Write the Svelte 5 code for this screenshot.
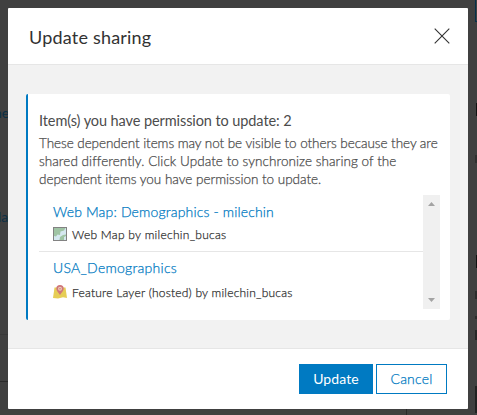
<script>
  const lines = [
    { text: 'These dependent items may not be visible to others because they are', ls: -0.06 },
    { text: 'shared differently. Click Update to synchronize sharing of the', ls: 0.05 },
    { text: 'dependent items you have permission to update.', ls: -0.02 }
  ];
</script>

<div class="page">
  <div class="behind">
    <span class="bl" style="left:-6px;top:104px">ne</span>
    <span class="bl" style="left:-2px;top:208px">la</span>
    <i style="left:0;top:334px;width:8px;height:1px;background:#393939"></i>
    <i style="left:0;top:381px;width:8px;height:1px;background:#2a2a2a"></i>
    <i style="left:406px;top:409px;width:1px;height:6px;background:#2a2a2a"></i>
    <i style="left:475px;top:0;width:1px;height:22px;background:#06314b"></i>
    <i style="left:475px;top:21px;width:2px;height:1px;background:#06314b"></i>
    <i style="left:476px;top:103px;width:1px;height:13px;background:#111"></i>
    <i style="left:475px;top:155px;width:2px;height:8px;background:#303030"></i>
    <i style="left:476px;top:255px;width:1px;height:13px;background:#111"></i>
    <i style="left:475px;top:291px;width:2px;height:8px;background:#2c2c2c"></i>
    <i style="left:475px;top:316px;width:2px;height:3px;background:#2c2c2c"></i>
    <i style="left:475px;top:330px;width:2px;height:10px;background:#262626"></i>
    <i style="left:475px;top:386px;width:2px;height:27px;background:#222"></i>
  </div>
  <section class="modal">
    <header>
      <h1>Update sharing</h1>
      <svg width="16" height="16" viewBox="0 0 16 16"><path d="M.7.7l14.6 14.6M15.3.7L.7 15.3" stroke="#323232" stroke-width="1.1" fill="none"/></svg>
    </header>
    <main>
      <div class="card">
        <h2>Item(s) you have permission to update: 2</h2>
        <p>{#each lines as l}<span class="line"><span style="letter-spacing:{l.ls}px">{l.text}</span></span>{/each}</p>
        <div class="list">
          <ul>
            <li>
              <a href="#map">Web Map: Demographics - milechin</a>
              <div class="meta">
                <svg width="14" height="14" viewBox="0 0 14 14"><path fill="#828282" d="M0 0h14v14H0z"/><path fill="#d5e8f0" d="M1 1h12v12H1z"/><path fill="#9fc4a4" d="M1 1h11.500L11 3.500 7.500 4.500 7 8 4.500 7.500 3 9.500 1 9zM6.500 13l.5-3 3-2 3-.5V9l-2 1v3z"/></svg>
                <span class="m1">Web Map by milechin_bucas</span>
              </div>
            </li>
            <li>
              <a class="a2" href="#layer">USA_Demographics</a>
              <div class="meta second">
                <svg width="14" height="14" viewBox="0 0 14 14"><path fill="#e6cd55" d="M1.500 2.500h11L14 13l-4-.7-5 1.200L0 13z"/><path fill="#d0777a" d="M7 10C5 7 3.300 5.500 3.300 3.500a3.700 3.500 0 0 1 7.400 0C10.700 5.500 9 7 7 10z"/><circle cx="7" cy="3.700" r="2" fill="#eacbb8"/><circle cx="7" cy="3.700" r=".8" fill="#d0777a"/></svg>
                <span class="m2">Feature Layer (hosted) by milechin_bucas</span>
              </div>
            </li>
          </ul>
          <div class="bar">
            <svg width="7" height="4" viewBox="0 0 7 4"><path fill="#a3a3a3" d="M3.500 0L7 4H0z"/></svg>
            <svg width="7" height="4" viewBox="0 0 7 4"><path fill="#a3a3a3" d="M3.500 4L7 0H0z"/></svg>
          </div>
        </div>
      </div>
    </main>
    <footer>
      <button class="primary">Update</button>
      <button class="ghost">Cancel</button>
    </footer>
  </section>
</div>

<style>
  .page { position: relative; width: 477px; height: 415px; overflow: hidden; background: #404040; padding: 8px; box-sizing: border-box; font-family: Lato, "Open Sans", sans-serif; color: #4c4c4c; }
  .page * { box-sizing: border-box; }
  .behind { position: absolute; inset: 0; }
  .behind i { position: absolute; }
  .bl { position: absolute; font-size: 14px; line-height: 18px; color: #0b2f45; white-space: nowrap; }
  .modal { position: relative; width: 460px; height: 401px; background: #fff; border-radius: 1px; display: flex; flex-direction: column; }
  header { height: 57px; flex: none; border-bottom: 1px solid #e6e6e6; display: flex; align-items: center; justify-content: space-between; padding: 0 18px 0 21px; }
  h1 { margin: 2px 0 0; font-size: 18px; line-height: 24px; font-weight: 400; color: #323232; letter-spacing: .2px; }
  main { height: 284px; flex: none; background: #f2f2f2; border-bottom: 1px solid #e6e6e6; padding: 29px 18px 28px; }
  .card { height: 226px; background: #fff; border-left: 2px solid #007ac2; border-radius: 2px; padding: 17px 10px 0 11px; }
  h2 { margin: 0; font-size: 14.5px; line-height: 20px; font-weight: 400; white-space: nowrap; letter-spacing: -.09px; }
  p { margin: 3px 0 0; font-size: 13.5px; font-weight: 300; line-height: 18px; white-space: nowrap; -webkit-text-stroke: .25px; }
  .line { display: block; height: 18px; }
  .list { margin-top: 7px; height: 114px; display: flex; }
  ul { list-style: none; margin: 0; padding: 0; flex: 1; }
  li { height: 57px; padding: 7px 0 0 14px; border-bottom: 1px solid #e6e6e6; white-space: nowrap; }
  li:last-child { border: 0; padding-top: 6px; }
  a { display: block; font-size: 14px; font-weight: 300; line-height: 20px; color: #007ac2; text-decoration: none; letter-spacing: .16px; -webkit-text-stroke: .25px; }
  .a2 { letter-spacing: .27px; }
  .meta { display: flex; align-items: center; height: 18px; margin-top: 3px; gap: 5px; font-size: 12px; font-weight: 300; color: #323232; -webkit-text-stroke: .25px; }
  .m1 { letter-spacing: .28px; }
  .m2 { letter-spacing: .22px; }
  .second { margin-top: 5px; }
  .bar { width: 17px; background: #f0f0f0; display: flex; flex-direction: column; justify-content: space-between; align-items: center; padding: 7px 0; }
  footer { flex: 1; display: flex; justify-content: flex-end; padding: 15px 21px 0; gap: 3px; }
  button { height: 30px; padding: 0; border: 1px solid #007ac2; font: 400 14px/28px Lato, sans-serif; background: #fff; color: #007ac2; width: 71px; }
  .ghost { font-weight: 300; letter-spacing: .2px; -webkit-text-stroke: .25px; }
  .primary { width: 74px; background: #007ac2; color: #fff; letter-spacing: .1px; }
</style>
